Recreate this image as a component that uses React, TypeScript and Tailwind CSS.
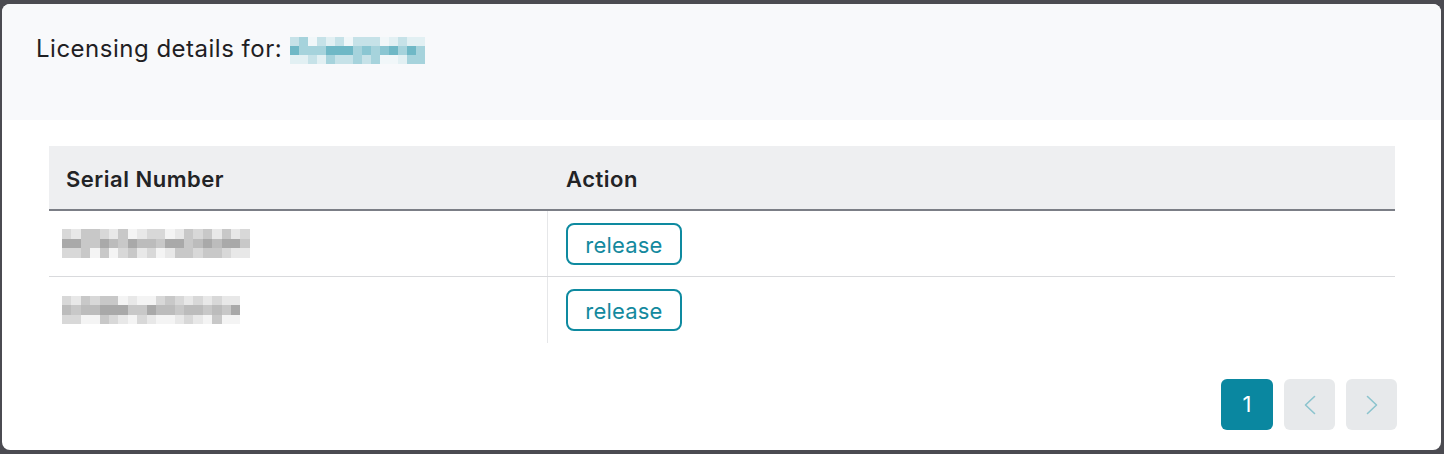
// pixelated placeholders (mimic the blurred values in the screenshot)
function Pixelated({ cols, rows, cell, palette, seed }: { cols: number; rows: number; cell: number; palette: string[]; seed: number }) {
  let s = seed;
  const next = () => {
    s = (s * 9301 + 49297) % 233280;
    return s / 233280;
  };
  return (
    <div className="flex flex-col">
      {Array.from({ length: rows }).map((_, r) => (
        <div key={r} className="flex">
          {Array.from({ length: cols }).map((_, c) => {
            const mid = r === Math.floor(rows / 2);
            const pool = mid ? palette.slice(0, 3) : palette.slice(2);
            const color = pool[Math.floor(next() * pool.length)];
            return <div key={c} style={{ width: cell, height: cell, backgroundColor: color }} />;
          })}
        </div>
      ))}
    </div>
  );
}

function Chevron({ dir }: { dir: 'left' | 'right' }) {
  return (
    <svg width="12" height="20" viewBox="0 0 12 20" fill="none" stroke="#8cc4ce" strokeWidth="1.6" strokeLinecap="round" strokeLinejoin="round">
      {dir === 'left' ? <polyline points="10.5,1.5 1.5,10 10.5,18.5" /> : <polyline points="1.5,1.5 10.5,10 1.5,18.5" />}
    </svg>
  );
}

const rows = [
  { cols: 20, seed: 7 },
  { cols: 19, seed: 31 },
];

export default function App() {
  return (
    <div className="w-[1444px] h-[454px] bg-[#4b4b51] pt-1 pl-[2px] pr-[3px] pb-1 font-['Inter',sans-serif]">
      <div className="h-[446px] bg-white rounded-lg overflow-hidden flex flex-col">
        <div className="h-[116px] bg-[#f8f9fb] pl-[34px] pt-[30px] flex items-start gap-[8px]">
          <span className="text-[24px] leading-[30px] tracking-[0.5px] text-[#1f2023]">Licensing details for:</span>
          <div className="mt-[3px]">
            <Pixelated cols={15} rows={3} cell={9} seed={3} palette={['#6fb8c6', '#8ac6d2', '#a6d3dc', '#c6e2e8', '#e2f0f3', '#f1f7f9']} />
          </div>
        </div>

        <div className="flex-1 pl-[47px] pr-[46px] pt-[26px]">
          <div className="w-full">
            <div className="flex h-[65px] pt-[3px] bg-[#eeeff1] border-b-2 border-[#7b7e86] text-[22px] font-semibold tracking-[0.5px] text-[#222326]">
              <div className="w-[499px] pl-[17px] flex items-center">Serial Number</div>
              <div className="flex-1 pl-[18px] flex items-center">Action</div>
            </div>
            {rows.map((row, i) => (
              <div key={i} className={`flex h-[66px] ${i === 0 ? 'border-b border-[#d9dadd]' : ''}`}>
                <div className="w-[499px] pl-[13px] flex items-center border-r border-[#e6e7e9]">
                  <Pixelated cols={row.cols} rows={3} cell={9.4} seed={row.seed} palette={['#a9a9a9', '#bcbcbc', '#c8c8c8', '#d8d8d8', '#e8e8e8', '#f4f4f4']} />
                </div>
                <div className="flex-1 pl-[18px] flex items-center">
                  <button className="w-[116px] h-[42px] pt-[2px] border-2 border-[#0e8aa0] rounded-lg text-[22px] leading-none text-[#13899e] tracking-[0.2px]">
                    release
                  </button>
                </div>
              </div>
            ))}
          </div>

          <div className="flex justify-end gap-[11px] mt-[36px] mr-[-2px]">
            <button className="w-[52px] h-[51px] rounded-md bg-[#0a87a0] text-white text-[22px] flex items-center justify-center">1</button>
            <button className="w-[51px] h-[51px] rounded-md bg-[#e7e9eb] flex items-center justify-center">
              <Chevron dir="left" />
            </button>
            <button className="w-[51px] h-[51px] rounded-md bg-[#e7e9eb] flex items-center justify-center">
              <Chevron dir="right" />
            </button>
          </div>
        </div>
      </div>
    </div>
  );
}
